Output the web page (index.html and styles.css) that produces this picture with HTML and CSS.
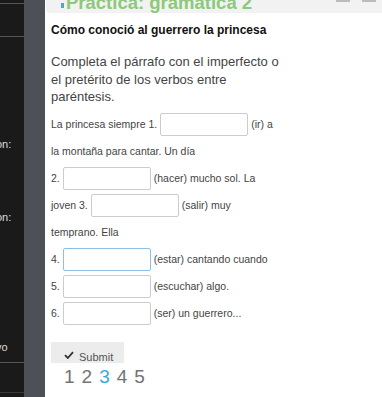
FILE: index.html
```html
<!DOCTYPE html>
<html lang="es">
<head>
    <meta charset="UTF-8">
    <title>Práctica: gramática 2</title>
    <link rel="stylesheet" href="styles.css">
</head>
<body>
    <div class="sidebar">
        <div class="side-item first"></div>
        <div class="side-item long">
            <span class="s1">on:</span>
            <span class="s2">on:</span>
            <span class="s3">vo</span>
        </div>
        <div class="side-item last"></div>
    </div>
    <div class="strip"></div>
    <div class="main">
        <div class="header">
            <h2><span class="dot"></span>Práctica: gramática 2</h2>
            <div class="tools"><span></span><span></span></div>
        </div>
        <div class="content">
            <h3>Cómo conoció al guerrero la princesa</h3>
            <p class="intro">Completa el párrafo con el imperfecto o el pretérito de los verbos entre paréntesis.</p>
            <div class="exercise">
                <div class="line">La princesa siempre 1. <input type="text"> (ir) a</div>
                <div class="line">la montaña para cantar. Un día</div>
                <div class="line">2. <input type="text"> (hacer) mucho sol. La</div>
                <div class="line">joven 3. <input type="text"> (salir) muy</div>
                <div class="line">temprano. Ella</div>
                <div class="line">4. <input type="text" class="focus"> (estar) cantando cuando</div>
                <div class="line">5. <input type="text"> (escuchar) algo.</div>
                <div class="line">6. <input type="text"> (ser) un guerrero...</div>
            </div>
            <button class="submit"><svg width="10" height="8" viewBox="0 0 10 8"><path d="M1 4.2 L3.8 7 L9 1.2" fill="none" stroke="#333" stroke-width="1.8"/></svg>Submit</button>
            <div class="pages">
                <span>1</span><span>2</span><span class="current">3</span><span>4</span><span>5</span>
            </div>
        </div>
    </div>
</body>
</html>
```

FILE: styles.css
```css
body {
    margin: 0;
    display: flex;
    height: 397px;
    overflow: hidden;
    font-family: "Liberation Sans", Arial, sans-serif;
    background: #fff;
}

.sidebar {
    width: 24px;
    background: #1a1a1a;
    color: #ddd;
    font-size: 11px;
    line-height: 13px;
    overflow: hidden;
    flex-shrink: 0;
}

.side-item {
    border-top: 1px solid #555;
}

.side-item.first {
    margin-top: 3px;
    height: 32px;
}

.side-item.long {
    height: 325px;
}

.side-item span {
    display: block;
    margin-left: -4px;
    white-space: nowrap;
}

.side-item .s1 {
    margin-top: 101px;
}

.side-item .s2 {
    margin-top: 60px;
}

.side-item .s3 {
    margin-top: 117px;
}

.side-item.last {
    height: 29px;
    border-bottom: 1px solid #3a3a3a;
}

.strip {
    width: 21px;
    background: #4d5057;
    flex-shrink: 0;
}

.main {
    flex: 1;
    min-width: 0;
}

.header {
    height: 13px;
    background: #f2f2f2;
    border-bottom-left-radius: 4px;
    overflow: hidden;
    display: flex;
    justify-content: space-between;
    margin-left: 1px;
}

.header h2 {
    margin: -8px 0 0 15px;
    font-size: 18.5px;
    line-height: 22px;
    color: #8cc97a;
    font-weight: bold;
    white-space: nowrap;
}

.dot {
    display: inline-block;
    width: 3px;
    height: 5px;
    background: #49a6d8;
    margin-right: 2px;
    vertical-align: 1px;
}

.tools {
    display: flex;
    gap: 12px;
    margin-right: 6px;
}

.tools span {
    width: 14px;
    height: 2px;
    background: #bbb;
}

.content {
    padding: 10px 0 0 6px;
}

.content h3 {
    margin: 0;
    font-size: 12px;
    color: #111;
    font-weight: bold;
}

.intro {
    margin: 16px 0 0;
    width: 235px;
    font-size: 13px;
    line-height: 17.5px;
    color: #444;
}

.exercise {
    margin-top: 5px;
}

.line {
    display: flex;
    align-items: center;
    gap: 3px;
    height: 27px;
    font-size: 10.5px;
    color: #444;
}

.line input {
    width: 88px;
    height: 23px;
    box-sizing: border-box;
    border: 1px solid #ccc;
    border-radius: 2px;
    margin: 0;
}

.line input.focus {
    border-color: #8cc0e4;
}

.submit {
    margin-top: 15px;
    width: 73px;
    height: 21px;
    background: #ececec;
    border: none;
    color: #555;
    font-family: inherit;
    font-size: 11px;
    display: flex;
    align-items: flex-end;
    padding: 0 0 0 13px;
    gap: 5px;
}

.submit svg {
    margin-bottom: 4px;
}

.pages {
    display: flex;
    gap: 7px;
    font-size: 19px;
    color: #737373;
    margin: 3px 0 0 13px;
}

.pages .current {
    color: #3aa8d8;
}
```
